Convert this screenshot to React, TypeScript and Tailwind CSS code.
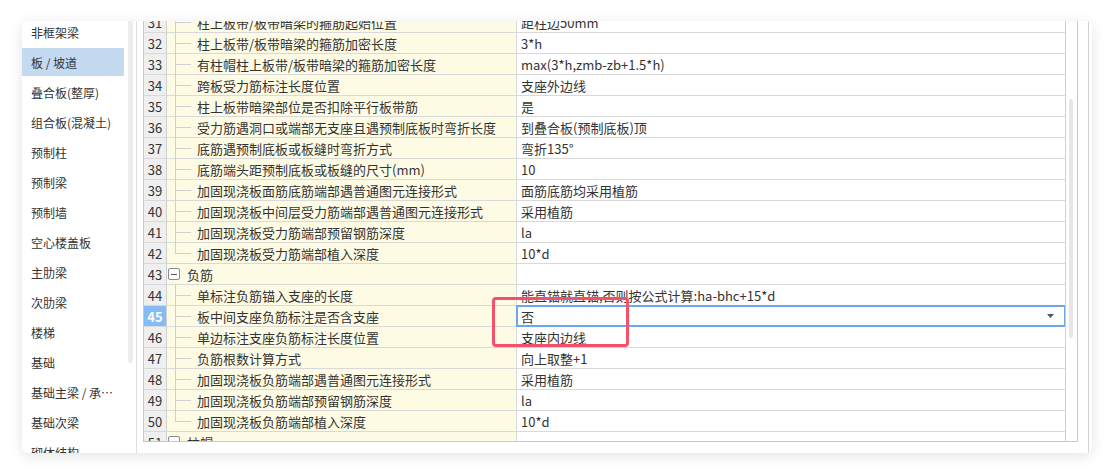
import React from 'react'

const navItems = [
  '非框架梁',
  '板 / 坡道',
  '叠合板(整厚)',
  '组合板(混凝土)',
  '预制柱',
  '预制梁',
  '预制墙',
  '空心楼盖板',
  '主肋梁',
  '次肋梁',
  '楼梯',
  '基础',
  '基础主梁 / 承台梁',
  '基础次梁',
  '砌体结构',
]

type RowData = {
  n: number
  label: string
  value?: string
  group?: boolean
  last?: boolean
}

const rows: RowData[] = [
  { n: 31, label: '柱上板带/板带暗梁的箍筋起始位置', value: '距柱边50mm' },
  { n: 32, label: '柱上板带/板带暗梁的箍筋加密长度', value: '3*h' },
  { n: 33, label: '有柱帽柱上板带/板带暗梁的箍筋加密长度', value: 'max(3*h,zmb-zb+1.5*h)' },
  { n: 34, label: '跨板受力筋标注长度位置', value: '支座外边线' },
  { n: 35, label: '柱上板带暗梁部位是否扣除平行板带筋', value: '是' },
  { n: 36, label: '受力筋遇洞口或端部无支座且遇预制底板时弯折长度', value: '到叠合板(预制底板)顶' },
  { n: 37, label: '底筋遇预制底板或板缝时弯折方式', value: '弯折135°' },
  { n: 38, label: '底筋端头距预制底板或板缝的尺寸(mm)', value: '10' },
  { n: 39, label: '加固现浇板面筋底筋端部遇普通图元连接形式', value: '面筋底筋均采用植筋' },
  { n: 40, label: '加固现浇板中间层受力筋端部遇普通图元连接形式', value: '采用植筋' },
  { n: 41, label: '加固现浇板受力筋端部预留钢筋深度', value: 'la' },
  { n: 42, label: '加固现浇板受力筋端部植入深度', value: '10*d', last: true },
  { n: 43, label: '负筋', group: true },
  { n: 44, label: '单标注负筋锚入支座的长度', value: '能直锚就直锚,否则按公式计算:ha-bhc+15*d' },
  { n: 45, label: '板中间支座负筋标注是否含支座', value: '否' },
  { n: 46, label: '单边标注支座负筋标注长度位置', value: '支座内边线' },
  { n: 47, label: '负筋根数计算方式', value: '向上取整+1' },
  { n: 48, label: '加固现浇板负筋端部遇普通图元连接形式', value: '采用植筋' },
  { n: 49, label: '加固现浇板负筋端部预留钢筋深度', value: 'la' },
  { n: 50, label: '加固现浇板负筋端部植入深度', value: '10*d', last: true },
  { n: 51, label: '柱帽', group: true },
]

const ACTIVE = 45

function Row({ row }: { row: RowData }) {
  const active = row.n === ACTIVE
  return (
    <div className="flex h-[21px] shrink-0 border-b border-[#d9d9d9]">
      <div
        className={`w-[23px] shrink-0 border-r border-[#d0d0d0] flex items-center justify-center ${
          active ? 'bg-[#86bcf6] text-white font-bold' : 'bg-[#efefef] text-[#333]'
        }`}
      >
        {row.n}
      </div>
      <div className="w-[350px] shrink-0 border-r border-[#d9d9d9] bg-[#fefbe5] relative flex items-center">
        {row.group ? (
          <>
            <div className="ml-[1px] w-[12px] h-[12px] border border-[#8a8a8a] rounded-[2px] bg-white flex items-center justify-center">
              <div className="w-[6px] h-px bg-[#555]" />
            </div>
            <span className="ml-[7px] text-[#333]">{row.label}</span>
          </>
        ) : (
          <>
            {/* tree connector */}
            <span
              className={`absolute left-[8px] top-[-1px] w-px bg-[#cfcfcf] ${row.last ? 'h-[11px]' : 'h-[22px]'}`}
            />
            <span className="absolute left-[8px] top-[10px] w-[16px] h-px bg-[#cfcfcf]" />
            <span className="ml-[30px] text-[#333] whitespace-nowrap">{row.label}</span>
          </>
        )}
      </div>
      <div className="flex-1 bg-white relative flex items-center pl-[4px] text-[#333] whitespace-nowrap">
        {active ? (
          <div className="absolute -top-px -bottom-px -left-px -right-px border-2 border-[#6ba6e6] bg-white flex items-center pl-[3px] pr-[10px]">
            <span className="flex-1">{row.value}</span>
            <svg width="7" height="4" viewBox="0 0 7 4">
              <path d="M0 0h7L3.5 4z" fill="#555" />
            </svg>
          </div>
        ) : (
          row.value
        )}
      </div>
    </div>
  )
}

export default function App() {
  return (
    <div className="relative w-[1113px] h-[474px] bg-white overflow-hidden font-['Noto_Sans_CJK_SC',sans-serif] text-[13px] leading-[17px]">
      <div className="pt-[21px] pl-[22px]">
        <div className="w-[1070px] h-[432px] bg-white rounded-md shadow-[0_3px_14px_rgba(0,0,0,0.11)] overflow-hidden flex">
          {/* sidebar */}
          <div className="w-[102px] shrink-0 overflow-hidden">
            <div className="-mt-[3px]">
              {navItems.map((item, i) => (
                <div
                  key={item}
                  className={`h-[28px] mb-[2px] flex items-center pl-[9px] text-[12px] text-[#333] ${
                    i === 1 ? 'bg-[#c4daf1]' : ''
                  }`}
                >
                  <span className="truncate">{item}</span>
                </div>
              ))}
            </div>
          </div>
          <div className="ml-[4px] w-[5px] h-[342px] bg-[#ececec] rounded-b-[3px] shrink-0" />
          <div className="ml-[3px] flex-1 border-l border-[#dedede] flex">
            <div className="pl-[6px] flex flex-col">
              {/* grid */}
              <div className="w-[935px] h-[421px] shrink-0 border-x border-b border-[#c8c8c8] flex overflow-hidden">
                <div className="w-[922px] border-r border-[#d0d0d0] overflow-hidden flex flex-col">
                  <div className="-mt-[9px] flex flex-col">
                    {rows.map((r) => (
                      <Row key={r.n} row={r} />
                    ))}
                  </div>
                </div>
                <div className="w-[11px] shrink-0 bg-white">
                  <div className="mt-[78px] ml-[3px] w-[4px] h-[239px] rounded-full bg-[#e6e6e6]" />
                </div>
              </div>
              <div className="mt-[9px] text-[#444] whitespace-nowrap">
                提示：带颜色的参数值与默认值不同，修改后请点击确定保存
              </div>
            </div>
            <div className="ml-[10px] h-full border-r border-[#d2d2d2]" />
          </div>
        </div>
      </div>

      {/* annotation */}
      <div className="absolute left-[492px] top-[297px] w-[137px] h-[50px] border-[3px] border-[#f4506a] rounded-[4px]" />
    </div>
  )
}
